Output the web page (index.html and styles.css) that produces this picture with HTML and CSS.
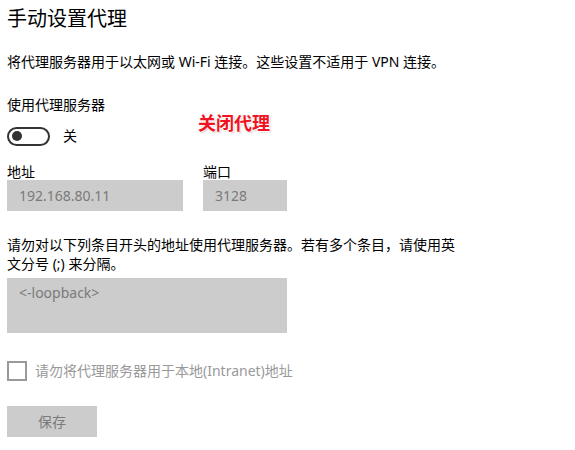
FILE: index.html
```html
<!DOCTYPE html>
<html lang="zh-CN">
<head>
<meta charset="utf-8">
<link rel="stylesheet" href="styles.css">
</head>
<body>
<div class="page">
  <h1 class="title">手动设置代理</h1>
  <p class="desc">将代理服务器用于以太网或 Wi-Fi 连接。这些设置不适用于 VPN 连接。</p>
  <div class="label-use">使用代理服务器</div>
  <div class="toggle-row">
    <span class="toggle"><span class="knob"></span></span>
    <span class="toggle-text">关</span>
  </div>
  <div class="fields">
    <div class="field">
      <div class="field-label">地址</div>
      <div class="input input-addr">192.168.80.11</div>
    </div>
    <div class="field">
      <div class="field-label">端口</div>
      <div class="input input-port">3128</div>
    </div>
  </div>
  <p class="para">请勿对以下列条目开头的地址使用代理服务器。若有多个条目，请使用英<br>文分号 (;) 来分隔。</p>
  <div class="textarea">&lt;-loopback&gt;</div>
  <div class="check-row">
    <span class="checkbox"></span>
    <span class="check-text">请勿将代理服务器用于本地(Intranet)地址</span>
  </div>
  <div class="btn">保存</div>
  <div class="annot">关闭代理</div>
</div>
</body>
</html>
```

FILE: styles.css
```css
html, body {
  margin: 0;
  padding: 0;
  background: #ffffff;
}
body {
  font-family: "Noto Sans", "Noto Sans CJK SC", sans-serif;
  color: #000;
  font-size: 14px;
}
.page {
  position: relative;
  padding: 0 7px;
  width: 561px;
  height: 450px;
  box-sizing: border-box;
}
.title {
  margin: 0;
  padding-top: 5px;
  font-size: 20px;
  font-weight: normal;
  line-height: 28px;
}
.desc {
  margin: 19px 0 0;
  line-height: 20px;
  white-space: nowrap;
}
.label-use {
  margin-top: 23px;
  line-height: 20px;
}
.toggle-row {
  margin-top: 11px;
  display: flex;
  align-items: center;
  height: 20px;
}
.toggle {
  width: 43px;
  height: 19px;
  box-sizing: border-box;
  border: 2px solid #333;
  border-radius: 10px;
  display: flex;
  align-items: center;
  padding-left: 3px;
}
.knob {
  width: 10px;
  height: 10px;
  border-radius: 50%;
  background: #333;
}
.toggle-text {
  margin-left: 13px;
  line-height: 20px;
}
.fields {
  display: flex;
  gap: 20px;
  margin-top: 18px;
}
.field-label {
  line-height: 16px;
}
.input {
  height: 31px;
  background: #cccccc;
  color: #7a7a7a;
  line-height: 31px;
  padding-left: 12px;
  box-sizing: border-box;
}
.input-addr { width: 176px; }
.input-port { width: 84px; }
.para {
  margin: 24px 0 0;
  line-height: 19px;
}
.textarea {
  margin-top: 5px;
  width: 280px;
  height: 55px;
  background: #cccccc;
  color: #7a7a7a;
  box-sizing: border-box;
  padding: 5px 12px;
  line-height: 20px;
}
.check-row {
  margin-top: 28px;
  display: flex;
  align-items: center;
  height: 20px;
}
.checkbox {
  width: 20px;
  height: 20px;
  box-sizing: border-box;
  border: 2px solid #999;
}
.check-text {
  margin-left: 8px;
  color: #999;
  line-height: 20px;
}
.btn {
  margin-top: 25px;
  width: 90px;
  height: 31px;
  background: #cccccc;
  color: #7a7a7a;
  text-align: center;
  line-height: 31px;
}
.annot {
  position: absolute;
  left: 198px;
  top: 110px;
  font-size: 18px;
  font-weight: bold;
  color: #f01322;
  line-height: 24px;
  font-family: "Noto Sans CJK SC", sans-serif;
  text-shadow: 1px 0 0 #fff, -1px 0 0 #fff, 0 1px 0 #fff, 0 -1px 0 #fff, 1px 1px 2px rgba(0,0,0,0.35);
}
```
